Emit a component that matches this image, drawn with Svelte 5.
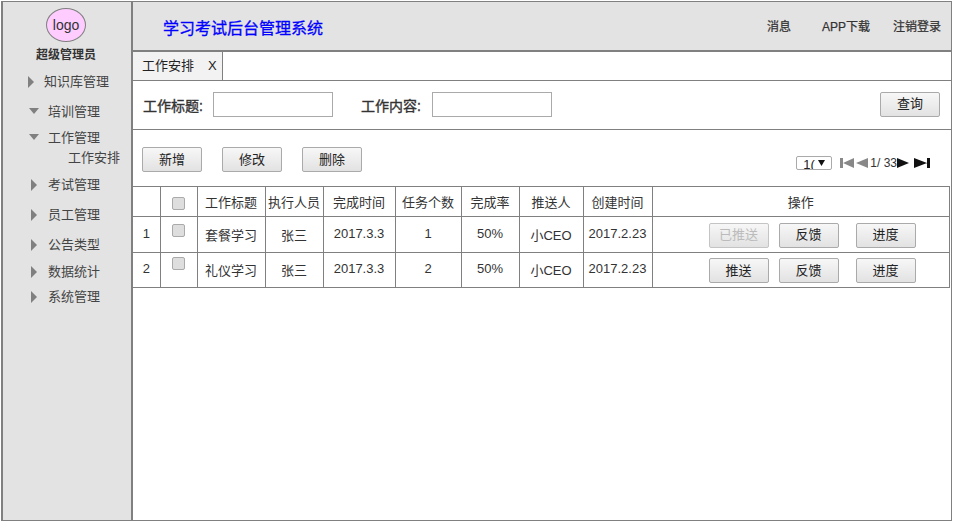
<script>
  const menu = [
    { t: '知识库管理', open: false, h: 30, first: true },
    { t: '培训管理', open: true, h: 26 },
    { t: '工作管理', open: true, h: 20, sub: '工作安排' },
    { t: '考试管理', open: false, h: 30 },
    { t: '员工管理', open: false, h: 30 },
    { t: '公告类型', open: false, h: 27 },
    { t: '数据统计', open: false, h: 25 },
    { t: '系统管理', open: false, h: 25 }
  ];
  const rows = [
    { n: '1', title: '套餐学习', task: '1', pushed: true },
    { n: '2', title: '礼仪学习', task: '2', pushed: false }
  ];
</script>

<div class="frame">
  <aside class="side">
    <div class="logo">logo</div>
    <div class="role">超级管理员</div>
    <ul class="menu">
      {#each menu as m}
        <li class="item" class:first={m.first} class:open={m.open} style="height:{m.h}px">
          <span class="arrow"></span><span>{m.t}</span>
        </li>
        {#if m.sub}<li class="sub">{m.sub}</li>{/if}
      {/each}
    </ul>
  </aside>
  <main class="main">
    <header class="head">
      <h1>学习考试后台管理系统</h1>
      <nav>
        <span class="n1">消息</span><span class="n2">APP下载</span><span class="n3">注销登录</span>
      </nav>
    </header>
    <div class="tabs"><div class="tab"><span>工作安排</span><span class="x">X</span></div></div>
    <div class="search">
      <label for="a">工作标题:</label><input id="a" class="inp" />
      <label class="l2" for="b">工作内容:</label><input id="b" class="inp" />
      <button class="btn query">查询</button>
    </div>
    <div class="tools">
      <button class="btn">新增</button><button class="btn">修改</button><button class="btn">删除</button>
      <div class="pager">
        <div class="sel"><span class="val">1(</span><svg width="7" height="6" viewBox="0 0 7 6"><path d="M0 0h7L3.500 6z" fill="#111"/></svg></div>
        <svg class="ic first" width="14" height="10" viewBox="0 0 14 10"><path d="M0 0h3v10H0zM3 5 14 0v10z" fill="#888"/></svg>
        <svg class="ic second" width="12" height="10" viewBox="0 0 12 10"><path d="M0 5 12 0v10z" fill="#888"/></svg>
        <span class="pg">1/ 33</span>
        <svg class="ic" width="12" height="10" viewBox="0 0 12 10"><path d="M12 5 0 0v10z" fill="#111"/></svg>
        <svg class="ic last" width="16" height="10" viewBox="0 0 16 10"><path d="M13 0h3v10h-3zM13 5 0 0v10z" fill="#111"/></svg>
      </div>
    </div>
    <table>
      <colgroup>
        <col style="width:27px"/><col style="width:37px"/><col style="width:68px"/><col style="width:58px"/><col style="width:72px"/><col style="width:66px"/><col style="width:58px"/><col style="width:64px"/><col style="width:69px"/><col/>
      </colgroup>
      <thead>
        <tr>
          <th></th><th><span class="cb"></span></th><th>工作标题</th><th>执行人员</th><th>完成时间</th><th>任务个数</th><th>完成率</th><th>推送人</th><th>创建时间</th><th>操作</th>
        </tr>
      </thead>
      <tbody>
        {#each rows as r}
          <tr>
            <td class="up">{r.n}</td>
            <td class="top"><span class="cb"></span></td>
            <td class="down">{r.title}</td>
            <td class="down">张三</td>
            <td class="up">2017.3.3</td>
            <td class="up">{r.task}</td>
            <td class="up">50%</td>
            <td class="down">小CEO</td>
            <td class="up">2017.2.23</td>
            <td class="ops">
              <button class="btn" disabled={r.pushed}>{r.pushed ? '已推送' : '推送'}</button><button class="btn">反馈</button><button class="btn">进度</button>
            </td>
          </tr>
        {/each}
      </tbody>
    </table>
  </main>
</div>

<style>
  :global(body) { margin: 0; background: #fff; }
  .frame {
    box-sizing: border-box; width: 951px; height: 520px; margin-left: 1px; margin-top: 1px;
    display: flex; border: 1px solid #808080; border-left-width: 2px;
    font: 13px/1.2 "Liberation Sans", "Noto Sans CJK SC", sans-serif; color: #333;
    overflow: hidden;
  }
  .side { box-sizing: border-box; width: 129px; flex: none; background: #e3e3e3; border-right: 1px solid #808080; }
  .logo {
    box-sizing: border-box; width: 40px; height: 34px; margin: 6px 0 0 43px;
    border: 1px solid #808080; border-radius: 50%; background: #ffccff;
    font-size: 14px; line-height: 33px; text-align: center; color: #333;
  }
  .role { font-size: 12px; font-weight: bold; line-height: 16px; margin: 5px 0 0 33px; white-space: nowrap; }
  .menu { list-style: none; margin: 10px 0 0; padding: 0; }
  .item { display: flex; align-items: flex-start; line-height: 18px; padding-left: 28px; gap: 11px; color: #444; }
  .item.first { padding-left: 25px; gap: 10px; }
  .item.open { padding-left: 26px; gap: 9px; }
  .arrow {
    width: 0; height: 0; flex: none; margin-top: 3px;
    border-left: 6px solid #808080; border-top: 6px solid transparent; border-bottom: 6px solid transparent;
  }
  .open .arrow {
    margin-top: 5px;
    border-top: 6px solid #808080; border-bottom: 0; border-left: 5px solid transparent; border-right: 5px solid transparent;
  }
  .sub { height: 27px; line-height: 18px; padding-left: 65px; color: #444; }

  .main { flex: 1; min-width: 0; border-left: 1px solid #808080; }
  .head {
    box-sizing: border-box; height: 50px; background: #e3e3e3; border-bottom: 2px solid #808080;
    display: flex; align-items: center; justify-content: space-between;
  }
  h1 { margin: 6px 0 0 30px; font-size: 16px; font-weight: normal; color: #0000ff; -webkit-text-stroke: 0.3px #0000ff; }
  nav { display: flex; margin-top: 3px; font-size: 12px; color: #333; -webkit-text-stroke: 0.25px #333; padding-right: 10px; }
  .n2 { margin-left: 31px; }
  .n3 { margin-left: 23px; }
  .tabs { box-sizing: border-box; height: 29px; border-bottom: 1px solid #808080; }
  .tab {
    box-sizing: border-box; width: 90px; height: 28px; background: #f2f2f2; border-right: 1px solid #808080;
    display: flex; align-items: center; padding-left: 9px; gap: 14px; color: #222;
  }
  .search {
    box-sizing: border-box; height: 49px; border-bottom: 1px solid #808080;
    display: flex; align-items: center; padding: 0 11px 2px 10px;
  }
  .search label { font-size: 14px; -webkit-text-stroke: 0.35px #333; width: 70px; flex: none; white-space: nowrap; margin-top: 5px; }
  .search .l2 { margin-left: 28px; width: 71px; }
  .inp { box-sizing: border-box; width: 120px; height: 25px; padding: 0; border: 1px solid #aaa; background: #fff; outline: none; }
  .btn {
    box-sizing: border-box; width: 60px; height: 25px; padding: 0; border: 1px solid #aaa; border-radius: 2px;
    background: linear-gradient(#f7f7f7, #e2e2e2); font: inherit; color: #222;
  }
  .btn:disabled { color: #bbb; border-color: #c4c4c4; }
  .query { margin-left: auto; }
  .tools { height: 56px; display: flex; align-items: flex-start; padding: 17px 0 0 9px; box-sizing: border-box; }
  .tools .btn { margin-right: 20px; }
  .pager { margin: 9px 0 0 auto; display: flex; align-items: center; padding-right: 21px; color: #333; font-size: 12px; }
  .sel {
    box-sizing: border-box; width: 36px; height: 14px; border: 1px solid #aaa; border-radius: 2px; margin-right: 8px;
    display: flex; align-items: center; justify-content: space-between; padding: 0 6px 0 6px; overflow: hidden;
  }
  .val { line-height: 13px; margin-top: 2px; color: #222; font-size: 13px; }
  .ic { flex: none; }
  .ic.first { margin-right: 2px; }
  .ic.second { margin-right: 2px; }
  .ic.last { margin-left: 5px; }
  .pg { white-space: nowrap; }
  table { width: 817px; border-collapse: collapse; table-layout: fixed; color: #333; }
  th, td { box-sizing: border-box; border: 1px solid #808080; padding: 0; text-align: center; font-weight: normal; white-space: nowrap; }
  th { height: 30px; padding-top: 3px; }
  thead th:first-child, tbody td:first-child { border-left: 0; }
  tbody tr:first-child td { height: 36px; }
  tbody tr:last-child td { height: 35px; }
  td.up { padding-bottom: 2px; }
  td.down { padding-top: 2px; }
  td.top { vertical-align: top; padding-top: 5px; }
  tbody tr:last-child td.top { padding-top: 2px; }
  .cb {
    display: inline-block; box-sizing: border-box; width: 13px; height: 13px; border: 1px solid #aaa; border-radius: 2px;
    background: #dedede; vertical-align: middle;
  }
  .ops { text-align: left; padding-left: 56px; padding-top: 1px; }
  .ops .btn { margin-right: 10px; vertical-align: middle; }
  .ops .btn:nth-child(2) { margin-right: 17px; }
</style>
